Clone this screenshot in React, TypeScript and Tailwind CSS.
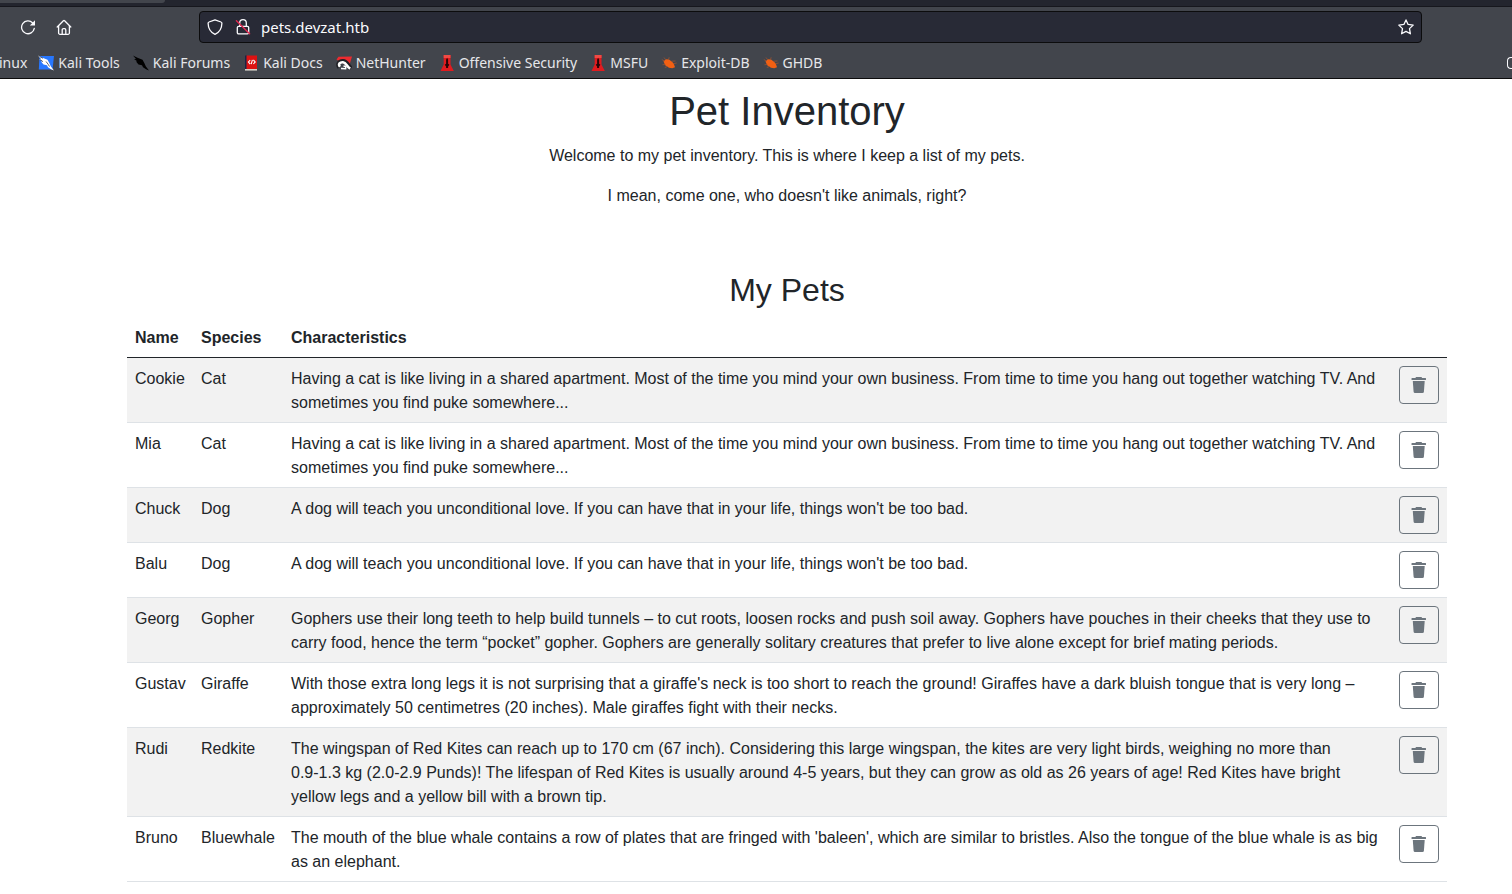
import type { ReactNode } from "react";

function ReloadIcon() {
  return (
    <svg width="16" height="16" viewBox="0 0 16 16" fill="none" stroke="#fbfbfe" strokeWidth="1.3" strokeLinecap="round">
      <path d="M14.3 9.4A6.4 6.4 0 1 1 12.700 4" />
      <path d="M15 1.200V6.400H9.800Z" fill="#fbfbfe" stroke="none" />
    </svg>
  );
}

function HomeIcon() {
  return (
    <svg width="16" height="16" viewBox="0 0 16 16" fill="none" stroke="#fbfbfe" strokeWidth="1.3" strokeLinecap="round" strokeLinejoin="round">
      <path d="M1.200 8 7.400 1.700a.9.9 0 0 1 1.200 0L14.800 8" />
      <path d="M2.600 7v6.900a1.400 1.400 0 0 0 1.400 1.400h8a1.400 1.400 0 0 0 1.400-1.400V7" />
      <path d="M6.200 15.200v-4.300a1.200 1.200 0 0 1 1.200-1.200h1.200a1.200 1.200 0 0 1 1.200 1.200v4.300" />
    </svg>
  );
}

function ShieldIcon() {
  return (
    <svg width="16" height="16" viewBox="0 0 16 16" fill="none" stroke="#fbfbfe" strokeWidth="1.3" strokeLinejoin="round">
      <path d="M8 .8 14 3c.6.2.9.7.9 1.300C14.800 9 12.800 13.300 8 15.300 3.200 13.300 1.200 9 1.100 4.300c0-.6.3-1.100.9-1.300Z" />
    </svg>
  );
}

function InsecureLockIcon() {
  return (
    <svg width="16" height="16" viewBox="0 0 16 16" fill="none" strokeLinecap="round">
      <g stroke="#fbfbfe" strokeWidth="1.3">
        <path d="M4.700 7V4a3.300 3.300 0 0 1 6.600 0v3" />
        <rect x="2.300" y="7.300" width="11.400" height="7.500" rx="1.300" />
      </g>
      <path d="M1.400 1.800 14.600 14.800" stroke="#e22850" strokeWidth="1.400" />
    </svg>
  );
}

function StarIcon() {
  return (
    <svg width="16" height="16" viewBox="0 0 16 16" fill="none" stroke="#fbfbfe" strokeWidth="1.3" strokeLinejoin="round">
      <path d="m8 .900 2.100 4.500 5.100.700-3.700 3.500.900 5.200L8 12.400l-4.400 2.400.900-5.200L.800 6.100l5.100-.700Z" />
    </svg>
  );
}

function TrashIcon() {
  return (
    <svg width="16" height="16" viewBox="0 0 16 16" fill="currentColor">
      <path d="M5 0h5.500l.6 1H14.500q.5 0 .5.500v1q0 .5-.5.500H1Q.5 3 .5 2.500v-1Q.5 1 1 1h3.400Z" />
      <path d="M1.800 4h11.900l-.8 10.700q-.1 1.300-1.400 1.300H4q-1.300 0-1.400-1.300Z" />
    </svg>
  );
}

function DragonIcon({ tiled }: { tiled?: boolean }) {
  return (
    <svg width="16" height="16" viewBox="0 0 16 16">
      {tiled && <path d="M1.500 1H16l-1.500 13.500H.8Z" fill="#2777ff" />}
      <path
        d="M0 .6 4.500 2.800 9.500 4.800l1.800 3.200 1.600 3.500L16 15.400l-3-1.100-3-2-1-2-3.500-.900L3 6.500l1.200-.200L1 4l2-.100Z"
        fill={tiled ? "#fff" : "#000"}
      />
      {tiled && <path d="m1.500 4.200 3.500 2.500M8 6.500l2.300 3 1.200 2M1.500 1.500l3.500 1.800" stroke="#1c2430" strokeWidth=".7" fill="none" />}
    </svg>
  );
}

function DocsIcon() {
  return (
    <svg width="16" height="16" viewBox="0 0 16 16">
      <path d="M2 .500h2v14H2Z" fill="#1b2546" />
      <path d="M3.500.500H14v13.500H3.500Z" fill="#dd1212" />
      <path d="M2 14h12v1.600H2Z" fill="#d5d0c8" />
      <path d="M7.200 5 5.400 7.100l1.800 1.900M10.400 5l1.800 1.900-1.800 2.100M9.400 4.800 8.200 9.200" stroke="#fff" strokeWidth="1.100" fill="none" />
    </svg>
  );
}

function NetHunterIcon() {
  return (
    <svg width="16" height="16" viewBox="0 0 16 16">
      <path d="M.500 4.500 2.500 1.800 16 1.500 12.500 13 9 9.500 4 7Z" fill="#ec2b30" />
      <path d="M3.500 12.500C1 9 3.500 6.200 7 6.300c4.200.200 4.600 4.500 8 7.200" stroke="#202126" strokeWidth="4.600" fill="none" />
      <path d="M4 11.700C1.800 9 4 7 7 7.200c3.400.300 3.600 4.300 7.200 6.500" stroke="#fff" strokeWidth="2.600" fill="none" />
      <path d="m5 13.600 4.600.200.200-2.200-2.300-.600" stroke="#fff" strokeWidth="1.500" fill="none" />
    </svg>
  );
}

function OffsecIcon() {
  return (
    <svg width="16" height="16" viewBox="0 0 16 16">
      <path d="M4.700 0h6.800v9.500l3.300 6.500H1.500L4.700 9.500Z" fill="#e01b1f" />
      <path d="M4.700 0h6.800v3H4.700Z" fill="#f04a44" />
      <path d="m8.100 2.800 1 2v4l1.300 1-1.300 1.700v1.500H7.100v-1.500L5.800 9.800l1.300-1v-4Z" fill="#260507" />
    </svg>
  );
}

function BugIcon() {
  return (
    <svg width="16" height="16" viewBox="0 0 16 16">
      <path d="m2.500 6.500 2.300-2.300 3.200.300 3 2.200 1.800 2 1.200 3.600-2.700 1-3.300-.500-3.800-2.600Z" fill="#f26013" />
      <path
        d="M3.500 6 .8 4.500M4.500 4.500 3 2.500M7.500 4.500l.7-2.200M10.500 6.200l4-.2M12.500 8.700l3.200-.700M4.500 9.500l-3 .200M6.500 11.500l-2.700 1"
        stroke="#a45431"
        strokeWidth=".7"
      />
    </svg>
  );
}

const bookmarks: { label: string; icon: ReactNode }[] = [
  { label: "Kali Tools", icon: <DragonIcon tiled /> },
  { label: "Kali Forums", icon: <DragonIcon /> },
  { label: "Kali Docs", icon: <DocsIcon /> },
  { label: "NetHunter", icon: <NetHunterIcon /> },
  { label: "Offensive Security", icon: <OffsecIcon /> },
  { label: "MSFU", icon: <OffsecIcon /> },
  { label: "Exploit-DB", icon: <BugIcon /> },
  { label: "GHDB", icon: <BugIcon /> },
];

const catText =
  "Having a cat is like living in a shared apartment. Most of the time you mind your own business. From time to time you hang out together watching TV. And sometimes you find puke somewhere...";
const dogText = "A dog will teach you unconditional love. If you can have that in your life, things won't be too bad.";

const pets: { name: string; species: string; text: ReactNode }[] = [
  { name: "Cookie", species: "Cat", text: catText },
  { name: "Mia", species: "Cat", text: catText },
  { name: "Chuck", species: "Dog", text: dogText },
  { name: "Balu", species: "Dog", text: dogText },
  {
    name: "Georg",
    species: "Gopher",
    text: "Gophers use their long teeth to help build tunnels – to cut roots, loosen rocks and push soil away. Gophers have pouches in their cheeks that they use to carry food, hence the term “pocket” gopher. Gophers are generally solitary creatures that prefer to live alone except for brief mating periods.",
  },
  {
    name: "Gustav",
    species: "Giraffe",
    text: "With those extra long legs it is not surprising that a giraffe's neck is too short to reach the ground! Giraffes have a dark bluish tongue that is very long – approximately 50 centimetres (20 inches). Male giraffes fight with their necks.",
  },
  {
    name: "Rudi",
    species: "Redkite",
    text: (
      <>
        The wingspan of Red Kites can reach up to 170 cm (67 inch). Considering this large wingspan, the kites are very
        light birds, weighing no more than <span className="whitespace-nowrap">0.9-1.3 kg</span> (2.0-2.9 Punds)! The
        lifespan of Red Kites is usually around 4-5 years, but they can grow as old as 26 years of age! Red Kites have
        bright yellow legs and a yellow bill with a brown tip.
      </>
    ),
  },
  {
    name: "Bruno",
    species: "Bluewhale",
    text: "The mouth of the blue whale contains a row of plates that are fringed with 'baleen', which are similar to bristles. Also the tongue of the blue whale is as big as an elephant.",
  },
];

function BrowserChrome() {
  return (
    <header className="overflow-hidden border-b border-[#0c0c0d] bg-[#42454c] font-['Noto_Sans',sans-serif] text-[#fbfbfe]">
      <div className="h-[7px] border-b border-[#16171d] bg-[#23252e]">
        <div className="h-[3px] w-[165px] rounded-br-sm bg-[#42454c]" />
      </div>
      <div className="flex items-center pt-1 pr-[90px] pl-5">
        <button type="button" aria-label="Reload" className="mr-5">
          <ReloadIcon />
        </button>
        <button type="button" aria-label="Home">
          <HomeIcon />
        </button>
        <div className="ml-[127px] flex h-8 flex-1 items-center rounded border border-[#0c0c0d] bg-[#282a36] px-[7px]">
          <ShieldIcon />
          <span className="mr-2.5 ml-3">
            <InsecureLockIcon />
          </span>
          <input
            aria-label="Address"
            type="text"
            defaultValue="pets.devzat.htb"
            className="min-w-0 flex-1 bg-transparent text-[15px] leading-5 outline-none"
          />
          <button type="button" aria-label="Bookmark this page">
            <StarIcon />
          </button>
        </div>
      </div>
      <nav className="flex h-[35px] items-center gap-[13px] pt-1 text-sm leading-5 whitespace-nowrap text-[#e6e7ea]">
        <a href="#linux" className="-mr-0.5 -ml-px">
          inux
        </a>
        {bookmarks.map((b) => (
          <a key={b.label} href="#bookmark" className="flex items-center gap-1">
            {b.icon}
            {b.label}
          </a>
        ))}
        <button
          type="button"
          aria-label="Other bookmarks"
          className="ml-auto h-3 w-[5px] rounded-l-sm border border-r-0 border-[#fbfbfe]"
        />
      </nav>
    </header>
  );
}

export default function App() {
  return (
    <div className="min-h-screen bg-white">
      <BrowserChrome />
      <main className="pt-2 pr-[65px] pl-[127px] font-['Liberation_Sans',Arial,sans-serif] text-base leading-6 text-[#212529]">
        <div className="text-center">
          <h1 className="mb-[9px] text-[40px] leading-12">Pet Inventory</h1>
          <p className="mb-4">Welcome to my pet inventory. This is where I keep a list of my pets.</p>
          <p>I mean, come one, who doesn't like animals, right?</p>
          <h2 className="mt-[63px] mb-2 text-[32px] leading-[38px]">My Pets</h2>
        </div>
        <table className="w-full table-fixed border-separate border-spacing-0 text-left">
          <thead>
            <tr className="[&>th]:border-b [&>th]:border-[#212529] [&>th]:px-2 [&>th]:pt-[9px] [&>th]:pb-[7px]">
              <th scope="col" className="w-[66px]">Name</th>
              <th scope="col" className="w-[90px]">Species</th>
              <th scope="col">Characteristics</th>
              <th scope="col" className="w-14" aria-label="Actions" />
            </tr>
          </thead>
          <tbody>
            {pets.map((pet) => (
              <tr
                key={pet.name}
                className="odd:bg-[#f2f2f2] [&>td]:border-b [&>td]:border-[#dee2e6] [&>td]:px-2 [&>td]:align-top"
              >
                <td className="pt-[9px] pb-[7px]">{pet.name}</td>
                <td className="pt-[9px] pb-[7px]">{pet.species}</td>
                <td className="pt-[9px] pb-[7px]">{pet.text}</td>
                <td className="py-2">
                  <button
                    type="button"
                    aria-label={`Delete ${pet.name}`}
                    className="flex h-[38px] w-10 items-center justify-center rounded border border-[#6c757d] text-[#6c757d]"
                  >
                    <TrashIcon />
                  </button>
                </td>
              </tr>
            ))}
          </tbody>
        </table>
      </main>
    </div>
  );
}
